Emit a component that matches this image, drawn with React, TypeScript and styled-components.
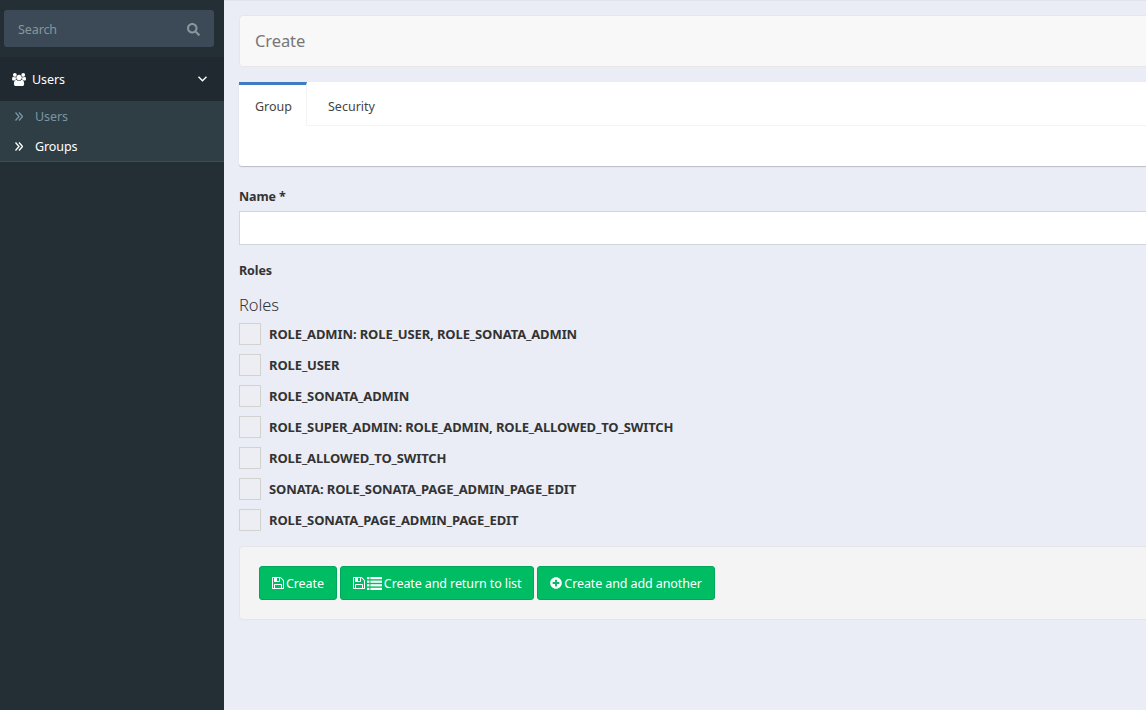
import React from 'react';
import styled, { createGlobalStyle } from 'styled-components';
import { FaPlusCircle, FaSearch } from 'react-icons/fa';

const GlobalStyle = createGlobalStyle`
  html, body {
    margin: 0;
    padding: 0;
    height: 100%;
    overflow: hidden;
  }
  body {
    background: #eaedf5;
    color: #333;
    font-family: 'Noto Sans', 'Open Sans', sans-serif;
    font-size: 12.5px;
    letter-spacing: -0.1px;
  }
  * {
    box-sizing: border-box;
  }
`;

const Page = styled.div`
  display: flex;
  width: 1146px;
  height: 710px;
  overflow: hidden;
`;

const Sidebar = styled.aside`
  flex: 0 0 224px;
  background: #242e35;
  padding-top: 10px;
`;

const SearchBox = styled.div`
  display: flex;
  align-items: center;
  justify-content: space-between;
  height: 37px;
  margin: 0 10px 10px 4px;
  padding: 1px 14px 0;
  border-radius: 3px;
  background: #3b4a56;
  color: #89969c;
`;

const MenuHeader = styled.div`
  display: flex;
  align-items: center;
  height: 44px;
  padding: 0 17px 0 12px;
  background: #1f292f;
  color: #fff;
  gap: 5px;
  svg:last-child {
    margin-left: auto;
  }
`;

const SubMenu = styled.div`
  display: flex;
  flex-direction: column;
  height: 61px;
  background: #2f3e45;
  border-bottom: 1px solid #3f4e54;
`;

const SubItem = styled.div<{ $active?: boolean }>`
  display: flex;
  align-items: center;
  gap: 12px;
  height: 30px;
  padding-left: 15px;
  color: ${(p) => (p.$active ? '#fff' : '#7b95a2')};
`;

const Main = styled.main`
  flex: 1;
  min-width: 0;
  padding: 14px 0 0 15px;
  border-top: 1px solid #dfe3ec;
  overflow: hidden;
`;

const Content = styled.div`
  width: 1000px;
`;

const TitleBar = styled.div`
  height: 52px;
  display: flex;
  align-items: center;
  padding: 0 0 1px 15px;
  background: #f8f8f8;
  border: 1px solid #e7e7e7;
  border-radius: 4px;
  color: #777;
  font-size: 16.5px;
`;

const TabsBox = styled.div`
  height: 84px;
  margin-top: 15px;
  background: #fff;
  border-radius: 3px;
  box-shadow: 0 1px 1px rgba(0, 0, 0, 0.2);
`;

const TabRow = styled.div`
  display: flex;
  height: 44px;
  border-bottom: 1px solid #f4f4f4;
`;

const Tab = styled.div<{ $active?: boolean }>`
  display: flex;
  align-items: center;
  height: ${(p) => (p.$active ? '44px' : '43px')};
  width: ${(p) => (p.$active ? '68px' : 'auto')};
  padding: 2px ${(p) => (p.$active ? '16px' : '21px')} 0;
  color: #444;
  letter-spacing: 0;
  background: ${(p) => (p.$active ? '#fff' : 'none')};
  border-top: 3px solid ${(p) => (p.$active ? '#3c7dc4' : 'transparent')};
  border-right: 1px solid ${(p) => (p.$active ? '#f4f4f4' : 'transparent')};
`;

const FieldLabel = styled.label`
  display: block;
  padding-top: 1px;
  font-weight: 700;
  line-height: 18px;
`;

const NameLabel = styled(FieldLabel)`
  margin-top: 21px;
`;

const RolesLabel = styled(FieldLabel)`
  margin-top: 16px;
`;

const TextInput = styled.input`
  display: block;
  width: 100%;
  height: 34px;
  margin-top: 5px;
  border: 1px solid #d2d6de;
  background: #fff;
  outline: none;
`;

const RolesTitle = styled.h4`
  margin: 13px 0 0;
  font-size: 16.5px;
  font-weight: 300;
  line-height: 24px;
`;

const RoleList = styled.div`
  display: flex;
  flex-direction: column;
  gap: 9px;
  margin-top: 6px;
`;

const RoleRow = styled.div`
  display: flex;
  align-items: center;
  gap: 8px;
  height: 22px;
  font-weight: 700;
  font-size: 13px;
  letter-spacing: -0.12px;
`;

const CheckBox = styled.span`
  display: block;
  width: 22px;
  height: 22px;
  border: 1px solid #d2d2ce;
  background: #eceef3;
`;

const ActionsBar = styled.div`
  display: flex;
  gap: 3px;
  height: 74px;
  margin-top: 15px;
  padding: 19px 19px 0;
  background: #f4f4f4;
  border: 1px solid #e3e5ea;
  border-radius: 4px;
`;

const GreenButton = styled.button`
  display: flex;
  align-items: center;
  gap: 2px;
  height: 34px;
  padding: 0 12px;
  border: 1px solid #00a65a;
  border-radius: 3px;
  background: #00bc62;
  color: #fff;
  font: inherit;
  letter-spacing: inherit;
`;

const SaveIcon = () => (
  <svg width='12' height='12' viewBox='128 128 1536 1536' fill='currentColor'>
    <path d='M512 1536h768v-384h-768v384zm896 0h128v-896q0-14-10-38.5t-20-34.5l-281-281q-10-10-34-20t-39-10v416q0 40-28 68t-68 28h-576q-40 0-68-28t-28-68v-416h-128v1280h128v-416q0-40 28-68t68-28h832q40 0 68 28t28 68v416zm-384-928v-320q0-13-9.5-22.5t-22.5-9.5h-192q-13 0-22.5 9.5t-9.5 22.5v320q0 13 9.5 22.5t22.5 9.5h192q13 0 22.5-9.5t9.5-22.5zm640 32v928q0 40-28 68t-68 28h-1344q-40 0-68-28t-28-68v-1344q0-40 28-68t68-28h928q40 0 88 20t76 48l280 280q28 28 48 76t20 88z' />
  </svg>
);

const ListIcon = () => (
  <svg width='15' height='13' viewBox='0 0 15 13' fill='currentColor'>
    {[0, 3.6, 7.2, 10.8].map((y) => (
      <g key={y}>
        <rect x='0' y={y} width='2.4' height='2.2' />
        <rect x='3.4' y={y} width='11.6' height='2.2' />
      </g>
    ))}
  </svg>
);

const UsersIcon = () => (
  <svg width='15' height='13' viewBox='0 0 2048 1792' fill='currentColor'>
    <path d='M593 896q-162 5-265 128h-134q-82 0-138-40.5t-56-118.5q0-353 124-353 6 0 43.5 21t97.5 42.5 119 21.5q67 0 133-23-5 37-5 66 0 139 81 256zm1071 637q0 120-73 189.5t-194 69.5h-874q-121 0-194-69.5t-73-189.5q0-53 3.5-103.5t14-109 26.5-108.5 43-97.5 62-81 85.5-53.5 111.5-20q10 0 43 21.5t73 48 107 48 135 21.5 135-21.5 107-48 73-48 43-21.5q61 0 111.5 20t85.5 53.5 62 81 43 97.5 26.5 108.5 14 109 3.5 103.5zm-1024-1277q0 106-75 181t-181 75-181-75-75-181 75-181 181-75 181 75 75 181zm704 384q0 159-112.5 271.5t-271.5 112.5-271.5-112.5-112.5-271.5 112.5-271.5 271.5-112.5 271.5 112.5 112.5 271.5zm576 225q0 78-56 118.5t-138 40.5h-134q-103-123-265-128 81-117 81-256 0-29-5-66 66 23 133 23 59 0 119-21.5t97.5-42.5 43.5-21q124 0 124 353zm-128-609q0 106-75 181t-181 75-181-75-75-181 75-181 181-75 181 75 75 181z' />
  </svg>
);

const DoubleAngleIcon = () => (
  <svg width='8' height='9' viewBox='0 0 8 9' fill='none' stroke='currentColor' strokeWidth='1.3'>
    <path d='M0.5 0.5L4 4.5L0.5 8.5M4 0.5L7.5 4.5L4 8.5' />
  </svg>
);

const AngleDownIcon = () => (
  <svg width='9' height='6' viewBox='0 0 9 6' fill='none' stroke='currentColor' strokeWidth='1.4'>
    <path d='M0.5 0.8L4.5 4.8L8.5 0.8' />
  </svg>
);

const ROLES = [
  'ROLE_ADMIN: ROLE_USER, ROLE_SONATA_ADMIN',
  'ROLE_USER',
  'ROLE_SONATA_ADMIN',
  'ROLE_SUPER_ADMIN: ROLE_ADMIN, ROLE_ALLOWED_TO_SWITCH',
  'ROLE_ALLOWED_TO_SWITCH',
  'SONATA: ROLE_SONATA_PAGE_ADMIN_PAGE_EDIT',
  'ROLE_SONATA_PAGE_ADMIN_PAGE_EDIT',
];

const App: React.FC = () => {
  return (
    <Page>
      <GlobalStyle />
      <Sidebar>
        <SearchBox>
          <span>Search</span>
          <FaSearch size={13} />
        </SearchBox>
        <MenuHeader>
          <UsersIcon />
          <span>Users</span>
          <AngleDownIcon />
        </MenuHeader>
        <SubMenu>
          <SubItem>
            <DoubleAngleIcon />
            <span>Users</span>
          </SubItem>
          <SubItem $active>
            <DoubleAngleIcon />
            <span>Groups</span>
          </SubItem>
        </SubMenu>
      </Sidebar>
      <Main>
        <Content>
          <TitleBar>Create</TitleBar>
          <TabsBox>
            <TabRow>
              <Tab $active>Group</Tab>
              <Tab>Security</Tab>
            </TabRow>
          </TabsBox>
          <NameLabel>Name *</NameLabel>
          <TextInput type='text' />
          <RolesLabel>Roles</RolesLabel>
          <RolesTitle>Roles</RolesTitle>
          <RoleList>
            {ROLES.map((role) => (
              <RoleRow key={role}>
                <CheckBox />
                <span>{role}</span>
              </RoleRow>
            ))}
          </RoleList>
          <ActionsBar>
            <GreenButton>
              <SaveIcon />
              Create
            </GreenButton>
            <GreenButton>
              <SaveIcon />
              <ListIcon />
              Create and return to list
            </GreenButton>
            <GreenButton>
              <FaPlusCircle size={12} />
              Create and add another
            </GreenButton>
          </ActionsBar>
        </Content>
      </Main>
    </Page>
  );
};

export default App;
